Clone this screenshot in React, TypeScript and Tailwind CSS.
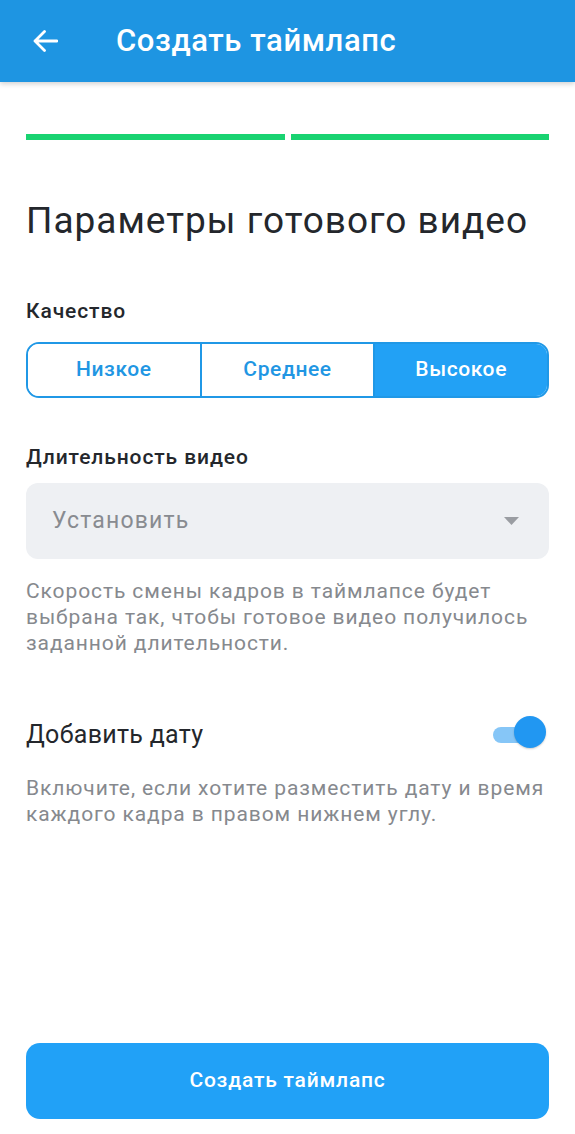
import { useState } from "react";

const font = { fontFamily: "Roboto, 'Noto Sans', Arial, sans-serif" };

function BackArrow() {
  return (
    <svg width="26" height="24" viewBox="0 0 26 24" fill="none">
      <path
        d="M25 12H3M12.5 2.5L3 12l9.5 9.5"
        stroke="white"
        strokeWidth="2.8"
        strokeLinecap="round"
        strokeLinejoin="round"
      />
    </svg>
  );
}

function Segmented({
  options,
  value,
  onChange,
}: {
  options: string[];
  value: number;
  onChange: (i: number) => void;
}) {
  return (
    <div className="mt-[21px] flex h-[56px] overflow-hidden rounded-[13px] border-2 border-[#2098e6]">
      {options.map((option, i) => (
        <button
          key={option}
          type="button"
          onClick={() => onChange(i)}
          className={`flex-1 text-[21px] font-medium tracking-[0.6px] ${
            i > 0 ? "border-l-2 border-[#2098e6]" : ""
          } ${i === value ? "bg-[#22a1f5] text-white" : "bg-white text-[#2196e3]"}`}
        >
          {option}
        </button>
      ))}
    </div>
  );
}

export default function App() {
  const [quality, setQuality] = useState(2);
  const [withDate, setWithDate] = useState(true);

  return (
    <div className="flex min-h-[1134px] flex-col bg-white" style={font}>
      <header className="relative z-10 flex h-[82px] items-center bg-[#1e95e2] shadow-[0_2px_5px_rgba(0,0,0,0.18)]">
        <button type="button" className="ml-[32px] flex h-[26px] w-[26px] items-center">
          <BackArrow />
        </button>
        <h1 className="ml-[58px] text-[31px] font-medium tracking-[0.6px] text-white">
          Создать таймлапс
        </h1>
      </header>

      <main className="flex flex-1 flex-col px-[26px] pb-[15px]">
        <div className="mt-[52px] flex gap-[6px]">
          <div className="h-[6px] flex-1 bg-[#19d371]" />
          <div className="h-[6px] flex-1 bg-[#19d371]" />
        </div>

        <h2 className="mt-[63px] whitespace-nowrap text-[37px] leading-[36px] tracking-[1px] text-[#24272c]">
          Параметры готового видео
        </h2>

        <div className="mt-[63px] text-[21px] font-medium leading-[19px] tracking-[0.9px] text-[#24272c]">
          Качество
        </div>
        <Segmented options={["Низкое", "Среднее", "Высокое"]} value={quality} onChange={setQuality} />

        <div className="mt-[50px] text-[21px] font-medium leading-[19px] tracking-[0.9px] text-[#24272c]">
          Длительность видео
        </div>
        <button
          type="button"
          className="mt-[16px] flex h-[76px] items-center justify-between rounded-[12px] bg-[#eef0f3] pl-[26px] pr-[30px]"
        >
          <span className="text-[23px] tracking-[1.2px] text-[#888b90]">Установить</span>
          <svg width="15" height="8" viewBox="0 0 15 8">
            <path d="M0 0h15L7.5 8z" fill="#9a9da2" />
          </svg>
        </button>
        <p className="mt-[19px] text-[21px] leading-[26px] tracking-[0.9px] text-[#86898e]">
          Скорость смены кадров в таймлапсе будет выбрана так, чтобы готовое видео получилось
          заданной длительности.
        </p>

        <div className="mt-[60px] flex h-[32px] items-start justify-between">
          <span className="mt-[6px] text-[25px] leading-[25px] tracking-[0.3px] text-[#24272c]">
            Добавить дату
          </span>
          <button
            type="button"
            onClick={() => setWithDate(!withDate)}
            className="relative mr-[1px] h-[32px] w-[55px]"
          >
            <span
              className={`absolute left-0 top-[11px] h-[16px] w-[48px] rounded-full ${
                withDate ? "bg-[#86c6f7]" : "bg-[#c5c7ca]"
              }`}
            />
            <span
              className={`absolute top-0 h-[32px] w-[32px] rounded-full shadow-[0_1px_2px_rgba(0,0,0,0.2)] ${
                withDate ? "right-[2px] bg-[#2197f2]" : "left-0 bg-[#f5f5f5]"
              }`}
            />
          </button>
        </div>
        <p className="mt-[27px] text-[21px] leading-[26px] tracking-[0.9px] text-[#86898e]">
          Включите, если хотите разместить дату и время каждого кадра в правом нижнем углу.
        </p>

        <button
          type="button"
          className="mt-auto h-[76px] rounded-[14px] bg-[#21a1f7] text-[21px] font-medium tracking-[0.8px] text-white"
        >
          Создать таймлапс
        </button>
      </main>
    </div>
  );
}
